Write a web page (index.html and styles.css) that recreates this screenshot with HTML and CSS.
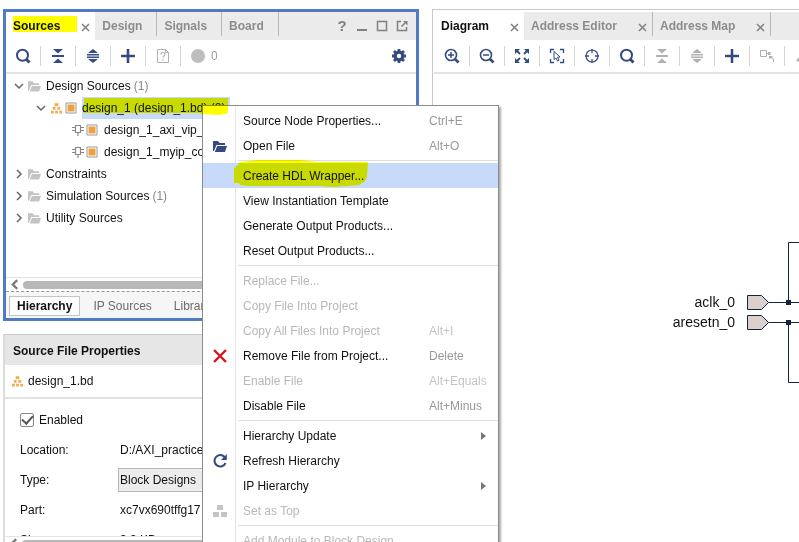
FILE: index.html
```html
<!DOCTYPE html>
<html lang="en">
<head>
<meta charset="utf-8">
<title>Block Design</title>
<link rel="stylesheet" href="styles.css">
</head>
<body>
<svg class="defs" aria-hidden="true">
  <symbol id="search" viewBox="0 0 16 16"><circle cx="7.500" cy="7.200" r="5.500" fill="none" stroke="currentColor" stroke-width="2"/><path d="M11 11l3.500 3.500" stroke="currentColor" stroke-width="3"/></symbol>
  <symbol id="collapse" viewBox="0 0 16 16"><path d="M3 1h10L8 5.500zM3 15h10L8 10.500z" fill="currentColor"/><path d="M2 8h12" stroke="currentColor" stroke-width="2"/></symbol>
  <symbol id="expand" viewBox="0 0 16 16"><path d="M3 5h10L8 1zM3 11h10L8 15z" fill="currentColor"/><path d="M2 6h12v1.500H2zM2 8.500h12V10H2z" fill="currentColor"/></symbol>
  <symbol id="plus" viewBox="0 0 16 16"><path d="M1 8h14M8 1v14" stroke="currentColor" stroke-width="2.600"/></symbol>
  <symbol id="file-help" viewBox="0 0 16 16"><path d="M2.500 1.500h8l3 3v10h-11z" fill="none" stroke="currentColor"/><path d="M10.500 1.500v3h3" fill="none" stroke="currentColor"/><path d="M6 6.500q0-2 2-2t2 1.800q0 1-1 1.600T8 9.500M8 11v1.500" fill="none" stroke="currentColor" stroke-width="1.200"/></symbol>
  <symbol id="zoom-in" viewBox="0 0 16 16"><circle cx="7" cy="7" r="5.500" fill="none" stroke="currentColor" stroke-width="1.600"/><path d="M4 7h6M7 4v6" stroke="currentColor" stroke-width="1.500"/><path d="M11 11l3.500 3.500" stroke="currentColor" stroke-width="2.600"/></symbol>
  <symbol id="zoom-out" viewBox="0 0 16 16"><circle cx="7" cy="7" r="5.500" fill="none" stroke="currentColor" stroke-width="1.600"/><path d="M4 7h6" stroke="currentColor" stroke-width="1.500"/><path d="M11 11l3.500 3.500" stroke="currentColor" stroke-width="2.600"/></symbol>
  <symbol id="fit" viewBox="0 0 16 16"><path d="M1 1h5L1 6zM15 1h-5l5 5zM1 15h5l-5-5zM15 15h-5l5-5z" fill="currentColor"/><path d="M2 2l4 4M14 2l-4 4M2 14l4-4M14 14l-4-4" stroke="currentColor" stroke-width="1.800"/></symbol>
  <symbol id="select-area" viewBox="0 0 16 16"><path d="M1.500 5V1.500H5M11 1.500h3.500V5M1.500 11v3.500H5M11 14.500h3.500V11" fill="none" stroke="currentColor" stroke-width="1.300"/><path d="M5 3.500v8l2-1.500 1.500 3 1.500-.8-1.500-2.900 2.500-.3z" fill="none" stroke="currentColor"/></symbol>
  <symbol id="target" viewBox="0 0 16 16"><circle cx="8" cy="8" r="6" fill="none" stroke="currentColor" stroke-width="1.200"/><path d="M8 1v4M8 11v4M1 8h4M11 8h4" stroke="currentColor" stroke-width="1.300"/></symbol>
  <symbol id="connect" viewBox="0 0 16 16"><path d="M1.500 2.500h6v6h-6zM7.500 5.500H11" fill="none" stroke="currentColor"/><path d="M9 4h2.500v3H9zM10 8h4l-1.200 1.200 2.200 2V14h-1v-2.500l-2-1.500-2 1z" fill="currentColor"/></symbol>
  <symbol id="pen" viewBox="0 0 16 16"><path d="M2 13L8 5l6 2-7 7z" fill="currentColor"/></symbol>
  <symbol id="gear" viewBox="0 0 16 16"><circle cx="8" cy="8" r="3.800" fill="none" stroke="currentColor" stroke-width="3.200"/><path d="M8 1v3M8 12v3M1 8h3M12 8h3M3 3l2 2M11 11l2 2M13 3l-2 2M5 11l-2 2" stroke="currentColor" stroke-width="2.800"/></symbol>
  <symbol id="close" viewBox="0 0 9 9"><path d="M1 1l7 7M8 1L1 8" stroke="currentColor" stroke-width="1.500"/></symbol>
  <symbol id="down" viewBox="0 0 10 10"><path d="M1 3l4 4 4-4" fill="none" stroke="currentColor" stroke-width="1.500"/></symbol>
  <symbol id="right" viewBox="0 0 10 10"><path d="M3 1l4 4-4 4" fill="none" stroke="currentColor" stroke-width="1.500"/></symbol>
  <symbol id="left" viewBox="0 0 10 10"><path d="M7 1L3 5l4 4" fill="none" stroke="currentColor" stroke-width="2"/></symbol>
  <symbol id="folder" viewBox="0 0 14 12"><path d="M0 11V1h5l1.500 2H12v2H3.500L1 11z" fill="currentColor"/><path d="M4.200 6H14l-2 6H1.800z" fill="currentColor"/></symbol>
  <symbol id="blocks" viewBox="0 0 14 12"><path d="M5 1h4v3H5zM3 5h3v3H3zM8 5h3v3H8zM1 9h3v3H1zM5.500 9h3v3h-3zM10 9h3v3h-3z" fill="currentColor"/></symbol>
  <symbol id="module" viewBox="0 0 12 12"><path d="M1 1h10v10H1z" fill="#fff" stroke="#999"/><path d="M2.500 2.500h7v7h-7z" fill="#f0a040"/></symbol>
  <symbol id="chip" viewBox="0 0 12 12"><path d="M3.500 1.500h5v7h-5zM0 3.500h3.500M0 6.500h3.500M8.500 3.500H12M8.500 6.500H12M6 8.500V12" fill="none" stroke="#888" stroke-width="1.200"/></symbol>
</svg>

<main class="workspace">
  <div class="column">
    <section class="panel active">
      <nav class="tabs">
        <button class="tab current">Sources<svg class="x"><use href="#close"/></svg></button>
        <button class="tab">Design</button>
        <button class="tab">Signals</button>
        <button class="tab">Board</button>
        <span class="window-buttons">
          <button aria-label="Help">?</button>
          <button aria-label="Minimize"><svg viewBox="0 0 12 12"><path d="M1 10h10" stroke="currentColor" stroke-width="2"/></svg></button>
          <button aria-label="Maximize"><svg viewBox="0 0 12 12"><path d="M1.500 1.500h9v9h-9z" fill="none" stroke="currentColor" stroke-width="1.500"/></svg></button>
          <button aria-label="Float"><svg viewBox="0 0 12 12"><path d="M5 1.500H1.500v9h9V7M5.500 6.500L9 3" fill="none" stroke="currentColor" stroke-width="1.500"/><path d="M7 1h4.500v4.500z" fill="currentColor"/></svg></button>
        </span>
      </nav>
      <div class="toolbar">
        <button aria-label="Search"><svg><use href="#search"/></svg></button>
        <button aria-label="Collapse all"><svg><use href="#collapse"/></svg></button>
        <button aria-label="Expand all"><svg><use href="#expand"/></svg></button>
        <button aria-label="Add sources"><svg><use href="#plus"/></svg></button>
        <button aria-label="File help" class="off"><svg><use href="#file-help"/></svg></button>
        <span class="count"><i></i>0</span>
        <button aria-label="Settings" class="settings"><svg><use href="#gear"/></svg></button>
      </div>
      <ul class="tree">
        <li><svg class="arrow"><use href="#down"/></svg><svg class="folder"><use href="#folder"/></svg>Design Sources <small>(1)</small></li>
        <li class="level2"><svg class="arrow"><use href="#down"/></svg><svg class="blocks"><use href="#blocks"/></svg><svg class="module"><use href="#module"/></svg><span class="selected">design_1 (design_1.bd) (2)</span></li>
        <li class="level3"><svg class="module"><use href="#chip"/></svg><svg class="module"><use href="#module"/></svg><span>design_1_axi_vip_</span></li>
        <li class="level3"><svg class="module"><use href="#chip"/></svg><svg class="module"><use href="#module"/></svg><span>design_1_myip_co</span></li>
        <li><svg class="arrow"><use href="#right"/></svg><svg class="folder"><use href="#folder"/></svg>Constraints</li>
        <li><svg class="arrow"><use href="#right"/></svg><svg class="folder"><use href="#folder"/></svg>Simulation Sources <small>(1)</small></li>
        <li><svg class="arrow"><use href="#right"/></svg><svg class="folder"><use href="#folder"/></svg>Utility Sources</li>
      </ul>
      <div class="scrollbar"><svg><use href="#left"/></svg><i></i></div>
      <nav class="views">
        <button class="current">Hierarchy</button>
        <button>IP Sources</button>
        <button>Libraries</button>
      </nav>
    </section>

    <section class="panel properties">
      <h2>Source File Properties</h2>
      <p class="file"><svg class="blocks"><use href="#blocks"/></svg>design_1.bd</p>
      <form class="fields">
        <label class="enabled"><input type="checkbox" checked>Enabled</label>
        <span>Location:</span><span>D:/AXI_practice</span>
        <label for="type">Type:</label><select id="type"><option>Block Designs</option></select>
        <span>Part:</span><span>xc7vx690tffg17</span>
        <span>Size:</span><span>3.3 KB</span>
      </form>
      <div class="scrollbar"><svg><use href="#left"/></svg><i></i></div>
    </section>
  </div>

  <section class="panel diagram">
    <nav class="tabs">
      <button class="tab current">Diagram<svg class="x"><use href="#close"/></svg></button>
      <button class="tab">Address Editor<svg class="x"><use href="#close"/></svg></button>
      <button class="tab">Address Map<svg class="x"><use href="#close"/></svg></button>
    </nav>
    <div class="toolbar">
      <button aria-label="Zoom in"><svg><use href="#zoom-in"/></svg></button>
      <button aria-label="Zoom out"><svg><use href="#zoom-out"/></svg></button>
      <button aria-label="Zoom fit"><svg><use href="#fit"/></svg></button>
      <button aria-label="Select area"><svg><use href="#select-area"/></svg></button>
      <button aria-label="Fit selection"><svg><use href="#target"/></svg></button>
      <button aria-label="Search"><svg><use href="#search"/></svg></button>
      <button aria-label="Collapse" class="off"><svg><use href="#collapse"/></svg></button>
      <button aria-label="Expand" class="off"><svg><use href="#expand"/></svg></button>
      <button aria-label="Add IP"><svg><use href="#plus"/></svg></button>
      <button aria-label="Connect" class="off"><svg><use href="#connect"/></svg></button>
      <button aria-label="Customize" class="off"><svg><use href="#pen"/></svg></button>
    </div>
    <svg class="canvas">
      <g fill="none" stroke="#14243c">
        <path d="M333.500 228.500H1200M353.500 168.500H1200M353.500 168.500v60M333.500 248.500H1200M353.500 248.500v60H1200"/>
        <path d="M312.500 221.500h14l7 7-7 7h-14zM312.500 241.500h14l7 7-7 7h-14z" fill="#dcd0cc"/>
      </g>
      <path d="M351 226h5v5h-5zM351 246h5v5h-5z" fill="#14243c"/>
      <text x="300" y="233" text-anchor="end">aclk_0</text>
      <text x="300" y="253" text-anchor="end">aresetn_0</text>
    </svg>
  </section>
</main>

<ul class="menu">
  <li><button>Source Node Properties...<kbd>Ctrl+E</kbd></button></li>
  <li><button><svg class="navy" viewBox="0 0 14 12"><use href="#folder"/></svg>Open File<kbd>Alt+O</kbd></button></li>
  <li class="rule"></li>
  <li><button class="hover">Create HDL Wrapper...</button></li>
  <li><button>View Instantiation Template</button></li>
  <li><button>Generate Output Products...</button></li>
  <li><button>Reset Output Products...</button></li>
  <li class="rule"></li>
  <li><button disabled>Replace File...</button></li>
  <li><button disabled>Copy File Into Project</button></li>
  <li><button disabled>Copy All Files Into Project<kbd>Alt+I</kbd></button></li>
  <li><button><svg viewBox="0 0 14 14"><path d="M1 1l12 12M13 1L1 13" stroke="#d8141c" stroke-width="2.400"/></svg>Remove File from Project...<kbd>Delete</kbd></button></li>
  <li><button disabled>Enable File<kbd>Alt+Equals</kbd></button></li>
  <li><button>Disable File<kbd>Alt+Minus</kbd></button></li>
  <li class="rule"></li>
  <li><button class="more">Hierarchy Update</button></li>
  <li><button><svg class="navy" viewBox="0 0 14 14"><path d="M11.500 3A5.700 5.700 0 1 0 12.500 9" fill="none" stroke="currentColor" stroke-width="2"/><path d="M13.800 0v6H8z" fill="currentColor"/></svg>Refresh Hierarchy</button></li>
  <li><button class="more">IP Hierarchy</button></li>
  <li><button disabled><svg viewBox="0 0 14 14"><path d="M4 1h6v5H4zM0 8h6v5H0zM8 8h6v5H8z" fill="#c4c4c4"/></svg>Set as Top</button></li>
  <li class="rule"></li>
  <li><button disabled>Add Module to Block Design</button></li>
</ul>

<svg class="marker" aria-hidden="true">
  <path d="M13 16h64v16H13zM84 98h144v15l-8 2-16-1-6-1H84zM234 168l4-3 2-3 18-2h42l18 2h50l-1 15-3 5-5 3-25 2-14-1h-70l-10-1-1-2h-5z"/>
</svg>
</body>
</html>
```
FILE: styles.css
```css
* { box-sizing: border-box; }

body {
  margin: 0;
  height: 100vh;
  overflow: hidden;
  position: relative;
  background: #fff;
  color: #111;
  font: 12px/22px "Liberation Sans", Arial, sans-serif;
}

button, select, input { font: inherit; color: inherit; margin: 0; }
button { border: 0; padding: 0; background: none; }
ul { list-style: none; margin: 0; padding: 0; }
svg { flex: none; }
.defs { display: none; }

.workspace {
  display: grid;
  grid-template-columns: minmax(0, 17fr) minmax(0, 15fr);
  gap: 13px;
  height: calc(100vh + 9px);
  padding: 9px 0 0 3px;
}

.column { display: flex; flex-direction: column; gap: 13px; min-height: 0; }

.panel {
  display: flex;
  flex-direction: column;
  overflow: hidden;
  border: 1px solid #c8c8c8;
  background: #fff;
}
.panel.active { flex: none; border: 3px solid #4f7bc4; }

/* Tab strip */
.tabs { display: flex; flex: none; height: 28px; background: #ebebeb; }
.tab {
  display: flex;
  align-items: center;
  height: 24px;
  padding: 4px 14px 0 7px;
  border-right: 1px solid #b8b8b8;
  color: #8c8c8c;
  font-weight: bold;
  white-space: nowrap;
}
.tab:has(.x) { padding-right: 5px; }
.tab.current { height: 28px; padding-bottom: 4px; background: #fff; color: #111; border: 0; }
.x { width: 9px; height: 9px; margin: 2px 0 0 21px; color: #808080; }

.window-buttons { display: flex; gap: 8px; margin: 0 8px 0 auto; color: #808080; }
.window-buttons button { width: 12px; display: flex; align-items: center; justify-content: center; font-size: 15px; font-weight: bold; }
.window-buttons svg { width: 12px; height: 12px; }

/* Toolbar */
.toolbar { display: flex; flex: none; height: 34px; border-bottom: 2px solid #e2e2e2; color: #354a80; }
.toolbar button {
  display: flex;
  flex: none;
  align-items: center;
  justify-content: center;
  width: 35px;
  height: 20px;
  margin-top: 6px;
  border-right: 1px solid #d4d4d4;
}
.toolbar svg { width: 16px; height: 16px; }
.toolbar .off { color: #b0b0b0; }
.toolbar .settings { width: 34px; margin-left: auto; border: 0; }
.count { display: flex; align-items: center; gap: 6px; padding-left: 10px; color: #9a9aa8; }
.count i { width: 14px; height: 14px; border-radius: 50%; background: #bebebe; }

/* Source tree */
.tree { min-height: 203px; padding-top: 1px; white-space: nowrap; }
.tree li { display: flex; align-items: center; height: 22px; padding-left: 8px; }
.tree small { margin-left: 3px; font-size: 12px; color: #888; }
.tree .level2 { padding-left: 30px; }
.tree .level3 { padding-left: 66px; gap: 2px; }
.tree .level3 span { margin-left: 4px; }
.arrow { width: 10px; height: 10px; margin-right: 4px; color: #666; }
.folder { width: 13px; height: 12px; margin-right: 5px; color: #c4c4c4; }
.blocks { width: 13px; height: 12px; margin-right: 2px; color: #f2ac50; }
.module { width: 12px; height: 12px; }
.selected { height: 22px; margin-left: 5px; padding-right: 5px; background: #c8dafa; }

.scrollbar { display: flex; flex: none; align-items: center; gap: 2px; height: 14px; padding-left: 3px; border-top: 1px solid #e4e4e4; }
.scrollbar svg { width: 12px; height: 11px; color: #777; }
.scrollbar i { flex: 1; height: 8px; border-radius: 4px 0 0 4px; background: #b8b8b8; }

.views { display: flex; gap: 4px; height: 27px; padding: 4px 3px; border-top: 1px dashed #999; background: #f6f6f6; color: #6c6c6c; }
.views button { height: 20px; padding: 0 8px; line-height: 18px; border: 1px solid transparent; }
.views .current { padding: 0 7px; border-color: #c4c4c4; background: #fff; color: #111; font-weight: bold; }

/* Properties */
.properties { flex: 1; min-height: 0; border-left: 2px solid #dcdcdc; }
.properties h2 { flex: none; height: 30px; margin: 0; padding-left: 8px; background: #e6e6e6; font-size: 12px; line-height: 32px; }
.file { display: flex; flex: none; align-items: center; gap: 2px; height: 34px; margin: 0; padding-left: 6px; border-bottom: 2px solid #e2e2e2; }
.fields {
  display: grid;
  flex: 1;
  min-height: 0;
  grid-template-columns: 98px 1fr;
  grid-auto-rows: 30px;
  align-items: center;
  overflow: hidden;
  padding: 6px 0 0 15px;
}
.fields span:nth-of-type(even) { padding-left: 2px; }
.enabled { grid-column: 1 / -1; display: flex; align-items: center; gap: 5px; }
.enabled input { appearance: none; width: 14px; height: 14px; border: 1px solid #888; border-radius: 2px; display: grid; place-items: center; }
.enabled input::before { content: ""; width: 5px; height: 9px; margin-top: -3px; border: solid #555; border-width: 0 2px 2px 0; transform: rotate(42deg); }
.fields select { appearance: none; height: 24px; padding: 0 1px; border: 1px solid #b8b8b8; border-radius: 0; background: #ececec; }

/* Diagram */
.diagram { padding: 2px 0 0 1px; border-right: 0; }
.diagram .toolbar { padding-left: 1px; }
.canvas { width: 100%; flex: 1; margin-left: 1px; font-size: 14px; fill: #111; }

/* Context menu */
.menu {
  position: absolute;
  top: 105px;
  left: 202px;
  width: 297px;
  padding: 2px 0;
  border: 1px solid #8c8c8c;
  background: linear-gradient(#e4e4e4, #e4e4e4) 32px 0 / 1px 100% no-repeat #fff;
  box-shadow: 2px 2px 2px #aaa;
}
.menu button {
  position: relative;
  display: flex;
  align-items: center;
  width: 100%;
  height: 25px;
  padding-left: 40px;
  white-space: nowrap;
}
.menu svg { position: absolute; left: 10px; width: 14px; height: 14px; }
.menu .navy { color: #354a80; }
.menu button:disabled { color: #b8b8b8; }
.menu .hover { background: #c8dafa; }
.menu kbd { width: 69px; margin-left: auto; font: inherit; text-align: left; color: #999; }
.menu button:disabled kbd { color: #c4c4c4; }
.menu .rule { height: 5px; padding: 2px 0 0 35px; }
.menu .rule::before { content: ""; display: block; height: 1px; background: #dedede; }
.more::after { content: ""; margin: 0 12px 0 auto; border: solid transparent; border-width: 4px 0 4px 5px; border-left-color: #777; }

/* Highlighter strokes */
.marker { position: absolute; inset: 0; width: 100%; height: 100%; fill: #ff0; mix-blend-mode: multiply; pointer-events: none; }
```
